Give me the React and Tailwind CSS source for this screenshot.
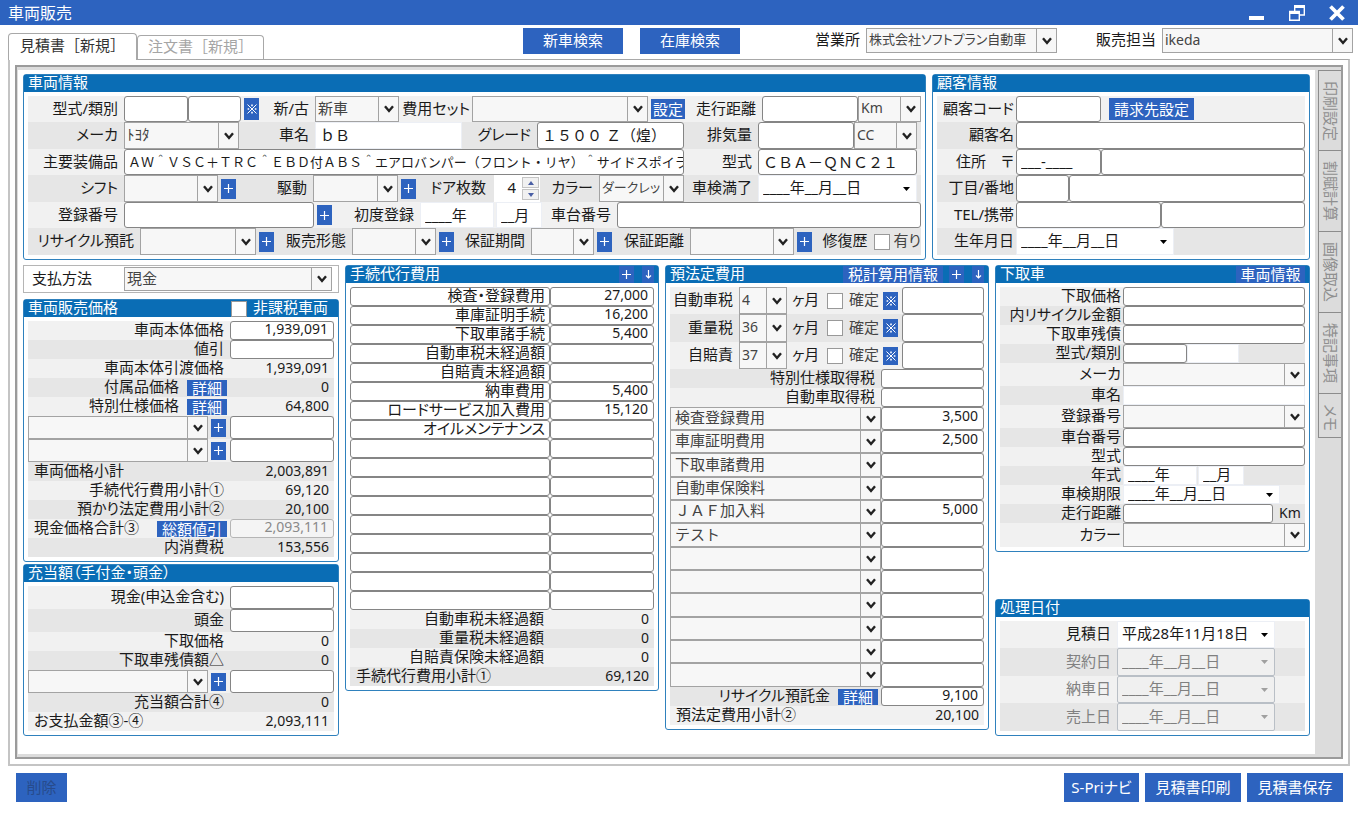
import { useState } from 'react';
import clsx from 'clsx';

// 手続代行費用の明細
const agencyFees = [
    { name: '検査・登録費用', price: '27,000' },
    { name: '車庫証明手続', price: '16,200' },
    { name: '下取車諸手続', price: '5,400' },
    { name: '自動車税未経過額', price: '' },
    { name: '自賠責未経過額', price: '' },
    { name: '納車費用', price: '5,400' },
    { name: 'ロードサービス加入費用', price: '15,120' },
    { name: 'オイルメンテナンス', price: '' },
    ...Array.from({ length: 9 }, () => ({ name: '', price: '' })),
];

// 預法定費用の明細
const legalFees = [
    { name: '検査登録費用', price: '3,500' },
    { name: '車庫証明費用', price: '2,500' },
    { name: '下取車諸費用', price: '' },
    { name: '自動車保険料', price: '' },
    { name: 'ＪＡＦ加入料', price: '5,000' },
    { name: 'テスト', price: '' },
    ...Array.from({ length: 6 }, () => ({ name: '', price: '' })),
];

const taxes = [
    { id: 'car-tax', name: '自動車税', months: '4', height: 'h-[27px]' },
    { id: 'weight-tax', name: '重量税', months: '36', height: 'h-[28px]' },
    { id: 'liability', name: '自賠責', months: '37', height: 'h-[27px]' },
];

const sideTabs = ['印刷設定', '割賦計算', '画像取込', '特記事項', 'メモ'];

const EMPTY_DATE = '____年__月__日';

function Panel({ title, actions, className, children }) {
    return (
        <section className={clsx('rounded-[3px] border border-[#2f81bd] bg-white', className)}>
            <header className="flex h-[17px] items-center bg-[#0a6db5] pl-1 text-white">
                <h2 className="flex-1 pb-0.5 leading-[17px] whitespace-nowrap">{title}</h2>
                {actions}
            </header>
            <div className="p-1">{children}</div>
        </section>
    );
}

// 一行おきに背景色を変える
function Rows({ className, children }) {
    return <div className={clsx('[&>*:nth-child(odd)]:bg-[#f1f1f1] [&>*:nth-child(even)]:bg-[#e6e6e6]', className)}>{children}</div>;
}

function Row({ height = 'h-[19px]', className, children }) {
    return <div className={clsx('flex items-center', height, className)}>{children}</div>;
}

function Label({ htmlFor, className = 'flex-1 pr-1.5', children }) {
    return (
        <label htmlFor={htmlFor} className={clsx('shrink-0 pb-0.5 text-right whitespace-nowrap', className)}>
            {children}
        </label>
    );
}

function Box({ className, plain, ...props }) {
    return (
        <input
            type="text"
            className={clsx(
                'h-full min-w-0 bg-white pb-0.5 [font-feature-settings:normal] outline-none',
                plain ? 'border border-[#eceff5]' : 'rounded-[3px] border border-[#858585]',
                className,
            )}
            {...props}
        />
    );
}

function Price({ className = 'w-[104px]', ...props }) {
    return <Box className={clsx('shrink-0 pr-[5px] pb-1 text-right text-sm leading-4', className)} {...props} />;
}

function Amount({ children }) {
    return <output className="w-[104px] shrink-0 pr-[5px] pb-0.5 text-right text-sm">{children}</output>;
}

function Combo({ className, textClass = 'pl-0.5', value = '', ...props }) {
    return (
        <div className={clsx('flex h-full min-w-0 border border-[#a3a3a3] bg-[#f7f7f7]', className)}>
            <select
                defaultValue={value}
                className={clsx('min-w-0 flex-1 appearance-none overflow-hidden bg-transparent pb-0.5 text-[#444] outline-none', textClass)}
                {...props}
            >
                <option value={value}>{value}</option>
            </select>
            <span className="pointer-events-none flex w-5 shrink-0 items-center justify-center border-l border-[#a3a3a3]">
                <svg width="10" height="8" viewBox="0 0 10 8" fill="none" stroke="#222" strokeWidth="2.4">
                    <path d="M1 1.2 5 6 9 1.2" />
                </svg>
            </span>
        </div>
    );
}

function DateBox({ className, value = EMPTY_DATE, disabled, ...props }) {
    return (
        <div
            className={clsx(
                'flex h-full items-center border pr-1.5',
                disabled ? 'rounded-[2px] border-[#b9bfc6] bg-[#f0f0f0] text-[#808080]' : 'border-[#eceff5] bg-white',
                className,
            )}
        >
            <input
                type="text"
                defaultValue={value}
                disabled={disabled}
                className="h-full min-w-0 flex-1 pb-1 pl-1 leading-4 outline-none"
                {...props}
            />
            <svg width="7" height="4" viewBox="0 0 7 4" fill={disabled ? '#a0a0a0' : '#000'}>
                <path d="M0 0h7L3.5 4z" />
            </svg>
        </div>
    );
}

function Btn({ className, children, ...props }) {
    return (
        <button
            type="button"
            className={clsx('flex shrink-0 items-center justify-center bg-[#2d63bf] leading-4 whitespace-nowrap text-white', className)}
            {...props}
        >
            {children}
        </button>
    );
}

function PlusIcon() {
    return (
        <svg width="9" height="9" viewBox="0 0 9 9" stroke="#fff" strokeWidth="1.2">
            <path d="M4.5 0v9M0 4.5h9" />
        </svg>
    );
}

function Plus({ className, label = '追加' }) {
    return (
        <Btn className={clsx('w-[15px]', className)} aria-label={label}>
            <PlusIcon />
        </Btn>
    );
}

function Mark({ className }) {
    return (
        <Btn className={clsx('w-[15px]', className)} aria-label="参照">
            <svg width="10" height="10" viewBox="0 0 10 10" stroke="#fff" strokeWidth="1">
                <path d="M.5.5l9 9M9.5.5l-9 9" />
                <path d="M5 .6v1.6M5 7.8v1.6M.6 5h1.6M7.8 5h1.6" strokeWidth="1.6" />
            </svg>
        </Btn>
    );
}

function Check({ className, ...props }) {
    return (
        <input
            type="checkbox"
            className={clsx('size-4 shrink-0 appearance-none border border-[#999] bg-white checked:bg-[#2d63bf]', className)}
            {...props}
        />
    );
}

function HeaderTools() {
    return (
        <>
            <Plus className="h-[17px]" label="行を追加" />
            <Btn className="mr-1 ml-2 h-[17px] w-3" aria-label="下へ">
                <svg width="7" height="9" viewBox="0 0 7 9" fill="none" stroke="#fff" strokeWidth="1.2">
                    <path d="M3.5 0v8M1 5.5l2.5 2.5L6 5.5" />
                </svg>
            </Btn>
        </>
    );
}

function TitleBar() {
    return (
        <header className="flex h-[25px] items-center bg-[#2d63bf] pr-[13px] pl-2 text-white">
            <h1 className="flex-1 text-base leading-6">車両販売</h1>
            <div className="flex items-center gap-6">
                <button type="button" aria-label="最小化">
                    <svg width="16" height="16" viewBox="0 0 16 16" fill="#fff">
                        <path d="M0 11h15v4H0z" />
                    </svg>
                </button>
                <button type="button" aria-label="元に戻す">
                    <svg width="16" height="16" viewBox="0 0 16 16" fill="none" stroke="#fff" strokeWidth="1.4">
                        <path d="M5.700 6V1.500h9.600V10H11" />
                        <path d="M5 1.500h11" strokeWidth="3" />
                        <path d="M.7 6.500h9.600v8.800H.7z" />
                        <path d="M0 7.500h11" strokeWidth="3" />
                    </svg>
                </button>
                <button type="button" aria-label="閉じる">
                    <svg width="16" height="16" viewBox="0 0 16 16" stroke="#fff" strokeWidth="3.8">
                        <path d="M1.500 1.500l13 13M14.500 1.500l-13 13" />
                    </svg>
                </button>
            </div>
        </header>
    );
}

function TopBar({ tab, setTab }) {
    return (
        <div className="flex h-[34px] items-start pl-2">
            <div className="flex w-[515px] items-end self-stretch [font-feature-settings:normal]" role="tablist">
                <button
                    type="button"
                    role="tab"
                    aria-selected={tab === 0}
                    onClick={() => setTab(0)}
                    className="z-10 -mb-px h-[27px] w-[129px] rounded-t border border-b-0 border-[#a8a8a8] bg-white pb-1 text-[#333]"
                >
                    見積書［新規］
                </button>
                <button
                    type="button"
                    role="tab"
                    aria-selected={tab === 1}
                    onClick={() => setTab(1)}
                    className="h-6 w-[127px] rounded-t border border-b-0 border-[#a8a8a8] bg-white pb-0.5 text-[#a5a5a5]"
                >
                    注文書［新規］
                </button>
            </div>
            <Btn className="mt-[3px] h-[26px] w-[100px] pb-0.5">新車検索</Btn>
            <Btn className="mt-[3px] ml-[17px] h-[26px] w-[100px] pb-0.5">在庫検索</Btn>
            <div className="mt-[3px] ml-auto flex h-[25px] items-center pr-[5px]">
                <Label htmlFor="office" className="pr-1.5">営業所</Label>
                <Combo id="office" className="w-[191px]" textClass="text-[13px] pl-0.5" value="株式会社ソフトプラン自動車" />
                <Label htmlFor="staff" className="w-[105px] pr-1.5">販売担当</Label>
                <Combo id="staff" className="w-[191px]" textClass="text-sm pl-0.5" value="ikeda" />
            </div>
        </div>
    );
}

function VehicleInfo() {
    return (
        <Panel title="車両情報">
            <Rows>
                <Row height="h-[26px]">
                    <Label htmlFor="type1" className="w-24 pr-1.5">型式/類別</Label>
                    <Box id="type1" className="w-16 px-1.5" />
                    <Box aria-label="類別" className="w-[53px] px-1.5" />
                    <Mark className="ml-[3px] h-[22px]" />
                    <Label htmlFor="condition" className="w-14 pr-1.5">新/古</Label>
                    <Combo id="condition" className="w-[84px]" value="新車" />
                    <Label htmlFor="cost-set" className="w-[73px] pr-0.5">費用セット</Label>
                    <Combo id="cost-set" className="flex-1" />
                    <Btn className="ml-[3px] h-5 w-[34px]">設定</Btn>
                    <Label htmlFor="mileage" className="w-[77px] pr-1.5">走行距離</Label>
                    <Box id="mileage" className="w-24 px-1.5" />
                    <Combo aria-label="距離単位" className="w-[63px]" textClass="text-sm pl-0.5" value="Km" />
                </Row>
                <Row height="h-[27px]">
                    <Label htmlFor="maker" className="w-24 pr-1.5">メーカ</Label>
                    <Combo id="maker" className="w-[115px]" value="ﾄﾖﾀ" />
                    <Label htmlFor="model" className="w-[76px] pr-1.5">車名</Label>
                    <Box id="model" plain className="w-[147px] px-1" defaultValue="ｂＢ" />
                    <Label htmlFor="grade" className="w-[75px] pr-1.5">グレード</Label>
                    <Box id="grade" className="flex-1 px-1" defaultValue="１５００ Ｚ（煌）" />
                    <Label htmlFor="cc" className="w-[74px] pr-1.5">排気量</Label>
                    <Box id="cc" className="w-24 px-1.5" />
                    <Combo aria-label="排気量単位" className="mr-1 w-[63px]" textClass="text-sm pl-0.5" value="CC" />
                </Row>
                <Row height="h-[26px]">
                    <Label htmlFor="equip" className="w-24 pr-1.5">主要装備品</Label>
                    <Box
                        id="equip"
                        className="flex-1 pl-[3px] text-[13px]"
                        defaultValue="ＡＷ＾ＶＳＣ＋ＴＲＣ＾ＥＢＤ付ＡＢＳ＾エアロバンパー（フロント・リヤ）＾サイドスポイラ"
                    />
                    <Label htmlFor="katashiki" className="w-[74px] pr-1.5">型式</Label>
                    <Box id="katashiki" className="mr-1 w-[159px] px-1" defaultValue="ＣＢＡ－ＱＮＣ２１" />
                </Row>
                <Row height="h-[27px]">
                    <Label htmlFor="shift" className="w-24 pr-1.5">シフト</Label>
                    <Combo id="shift" className="w-[94px]" />
                    <Plus className="ml-[3px] h-5" />
                    <Label htmlFor="drive" className="w-[77px] pr-1.5">駆動</Label>
                    <Combo id="drive" className="w-[85px]" />
                    <Plus className="ml-[3px] h-5" />
                    <Label htmlFor="doors" className="w-[78px] pr-2">ドア枚数</Label>
                    <div className="flex h-full w-[46px] items-center bg-white pr-px">
                        <input id="doors" type="text" defaultValue="4" className="min-w-0 flex-1 pr-1.5 pb-0.5 text-right outline-none" />
                        <div className="flex flex-col gap-px">
                            <button type="button" aria-label="増やす" className="flex h-[11px] w-[17px] items-center justify-center border border-[#c4c4c4] bg-[#f1f1f1]">
                                <svg width="6" height="4" viewBox="0 0 6 4" fill="#4a5fa5"><path d="M3 0l3 4H0z" /></svg>
                            </button>
                            <button type="button" aria-label="減らす" className="flex h-[11px] w-[17px] items-center justify-center border border-[#c4c4c4] bg-[#f1f1f1]">
                                <svg width="6" height="4" viewBox="0 0 6 4" fill="#4a5fa5"><path d="M0 0h6L3 4z" /></svg>
                            </button>
                        </div>
                    </div>
                    <Label htmlFor="color" className="w-[59px] pr-1.5">カラー</Label>
                    <Combo id="color" className="flex-1" textClass="text-[13px] pl-0.5" value="ダークレッ" />
                    <Label htmlFor="inspection" className="w-[74px] pr-1.5">車検満了</Label>
                    <DateBox id="inspection" className="mr-1 w-[159px]" />
                </Row>
                <Row height="h-[26px]">
                    <Label htmlFor="reg-no" className="w-24 pr-1.5">登録番号</Label>
                    <Box id="reg-no" className="w-[190px] px-1.5" />
                    <Plus className="ml-[3px] h-5" />
                    <Label htmlFor="first-year" className="w-[88px] pr-1.5">初度登録</Label>
                    <Box id="first-year" plain className="w-[74px] pl-1" defaultValue="____年" />
                    <Box aria-label="初度登録月" plain className="ml-0.5 w-[46px] pl-1" defaultValue="__月" />
                    <Label htmlFor="chassis" className="w-[75px] pr-1.5">車台番号</Label>
                    <Box id="chassis" className="flex-1 px-1.5" />
                </Row>
                <Row height="h-[27px]">
                    <Label htmlFor="recycle" className="w-28 pr-1.5">リサイクル預託</Label>
                    <Combo id="recycle" className="w-[116px]" />
                    <Plus className="ml-[3px] h-5" />
                    <Label htmlFor="sale-type" className="w-[78px] pr-1.5">販売形態</Label>
                    <Combo id="sale-type" className="w-[84px]" />
                    <Plus className="ml-[3px] h-5" />
                    <Label htmlFor="warranty" className="w-[77px] pr-1.5">保証期間</Label>
                    <Combo id="warranty" className="w-[63px]" />
                    <Plus className="ml-[3px] h-5" />
                    <Label htmlFor="warranty-km" className="w-[78px] pr-1.5">保証距離</Label>
                    <Combo id="warranty-km" className="flex-1" />
                    <Plus className="ml-[3px] h-5" />
                    <span className="w-[62px] pr-1.5 pb-0.5 text-right">修復歴</span>
                    <Check id="repaired" />
                    <Label htmlFor="repaired" className="pl-1 text-[#444]">有り</Label>
                </Row>
            </Rows>
        </Panel>
    );
}

function CustomerInfo() {
    const label = 'w-[79px] pr-0.5';
    return (
        <Panel title="顧客情報">
            <Rows>
                <Row height="h-[26px]">
                    <Label htmlFor="cust-code" className={label}>顧客コード</Label>
                    <Box id="cust-code" className="w-[85px] px-1.5" />
                    <Btn className="ml-2 h-[22px] w-[85px]">請求先設定</Btn>
                </Row>
                <Row height="h-[27px]">
                    <Label htmlFor="cust-name" className={label}>顧客名</Label>
                    <Box id="cust-name" className="flex-1 px-1.5" />
                </Row>
                <Row height="h-[26px]">
                    <Label htmlFor="zip" className={label}>住所　〒</Label>
                    <Box id="zip" className="w-[85px] pl-1" defaultValue="___-____" />
                    <Box aria-label="住所" className="flex-1 px-1.5" />
                </Row>
                <Row height="h-[27px]">
                    <Label htmlFor="block" className={label}>丁目/番地</Label>
                    <Box id="block" className="w-[53px] px-1.5" />
                    <Box aria-label="番地" className="flex-1 px-1.5" />
                </Row>
                <Row height="h-[26px]">
                    <Label htmlFor="tel" className={label}>TEL/携帯</Label>
                    <Box id="tel" className="flex-1 px-1.5" />
                    <Box aria-label="携帯" className="flex-1 px-1.5" />
                </Row>
                <Row height="h-[27px]">
                    <Label htmlFor="birthday" className={label}>生年月日</Label>
                    <DateBox id="birthday" className="w-[158px]" />
                </Row>
            </Rows>
        </Panel>
    );
}

function SumRow({ label, value, left, action }) {
    return (
        <Row>
            <span className={clsx('flex-1 pb-0.5 whitespace-nowrap', left ? 'pl-1.5' : 'pr-1.5 text-right')}>{label}</span>
            {action && <Btn className="mr-[3px] ml-0.5 h-4 w-10">{action}</Btn>}
            <Amount>{value}</Amount>
        </Row>
    );
}

function ExtraRow({ name }) {
    return (
        <Row height="h-[23px]">
            <Combo aria-label={name} className="flex-1" />
            <Plus className="mr-1 ml-[3px] h-[18px]" />
            <Price aria-label={name + '金額'} />
        </Row>
    );
}

function SalesPrice() {
    return (
        <Panel
            title="車両販売価格"
            actions={
                <div className="flex items-center pr-2.5">
                    <Check id="tax-free" />
                    <label htmlFor="tax-free" className="pb-0.5 pl-1.5 leading-[17px]">非課税車両</label>
                </div>
            }
        >
            <Rows>
                <Row>
                    <Label htmlFor="body-price">車両本体価格</Label>
                    <Price id="body-price" defaultValue="1,939,091" />
                </Row>
                <Row>
                    <Label htmlFor="discount">値引</Label>
                    <Price id="discount" />
                </Row>
                <SumRow label="車両本体引渡価格" value="1,939,091" />
                <SumRow label="付属品価格" value="0" action="詳細" />
                <SumRow label="特別仕様価格" value="64,800" action="詳細" />
                <ExtraRow name="追加項目1" />
                <ExtraRow name="追加項目2" />
                <SumRow label="車両価格小計" value="2,003,891" left />
                <SumRow label="手続代行費用小計①" value="69,120" />
                <SumRow label="預かり法定費用小計②" value="20,100" />
                <Row>
                    <Label htmlFor="cash-total" className="flex-1 pl-1.5 text-left!">現金価格合計③</Label>
                    <Btn className="mr-[3px] h-4 w-[70px]">総額値引</Btn>
                    <Price id="cash-total" disabled className="w-[104px] border-[#b5b5b5]! bg-[#f4f4f4]! text-[#8a8a8a]" defaultValue="2,093,111" />
                </Row>
                <SumRow label="内消費税" value="153,556" />
            </Rows>
        </Panel>
    );
}

function Deposit() {
    return (
        <Panel title="充当額（手付金・頭金）" className="mt-0.5">
            <Rows>
                <Row height="h-[23px]">
                    <Label htmlFor="cash">現金(申込金含む)</Label>
                    <Price id="cash" />
                </Row>
                <Row height="h-[23px]">
                    <Label htmlFor="down">頭金</Label>
                    <Price id="down" />
                </Row>
                <SumRow label="下取価格" value="0" />
                <SumRow label="下取車残債額△" value="0" />
                <ExtraRow name="充当項目" />
                <SumRow label="充当額合計④" value="0" />
                <SumRow label="お支払金額③-④" value="2,093,111" left />
            </Rows>
        </Panel>
    );
}

function AgencyFees() {
    return (
        <Panel title="手続代行費用" actions={<HeaderTools />}>
            {agencyFees.map((fee, i) => (
                <Row key={i}>
                    <Box aria-label={`費用名${i + 1}`} className="flex-1 pr-1 pb-1 text-right leading-4 [font-feature-settings:'palt']!" defaultValue={fee.name} />
                    <Price aria-label={`金額${i + 1}`} defaultValue={fee.price} />
                </Row>
            ))}
            <Rows>
                <SumRow label="自動車税未経過額" value="0" />
                <SumRow label="重量税未経過額" value="0" />
                <SumRow label="自賠責保険未経過額" value="0" />
                <SumRow label="手続代行費用小計①" value="69,120" left />
            </Rows>
        </Panel>
    );
}

function LegalFees() {
    return (
        <Panel
            title="預法定費用"
            actions={
                <>
                    <Btn className="mr-1.5 h-[17px] w-[100px] pb-0.5">税計算用情報</Btn>
                    <HeaderTools />
                </>
            }
        >
            <Rows>
                {taxes.map((tax) => (
                    <Row key={tax.id} height={tax.height}>
                        <Label htmlFor={tax.id} className="flex-1 pr-1.5">{tax.name}</Label>
                        <Combo id={tax.id} className="w-12" textClass="text-sm pl-0.5" value={tax.months} />
                        <span className="w-10 pb-0.5 pl-[5px]">ヶ月</span>
                        <Check id={tax.id + '-fixed'} />
                        <Label htmlFor={tax.id + '-fixed'} className="w-[38px] pr-0.5 text-[#444]">確定</Label>
                        <Mark className="mr-1 ml-0.5 h-[18px]" />
                        <Price className="w-[82px]" aria-label={tax.name + '金額'} />
                    </Row>
                ))}
                <Row>
                    <Label htmlFor="special-tax">特別仕様取得税</Label>
                    <Price id="special-tax" className="w-[103px]" />
                </Row>
                <Row>
                    <Label htmlFor="acq-tax">自動車取得税</Label>
                    <Price id="acq-tax" className="w-[103px]" />
                </Row>
                {legalFees.map((fee, i) => (
                    <Row key={i} height={i % 3 === 2 ? 'h-6' : 'h-[23px]'}>
                        <Combo
                            aria-label={`法定費用${i + 1}`}
                            className="flex-1"
                            textClass="pl-1 [font-feature-settings:normal]"
                            value={fee.name}
                        />
                        <Price className="w-[103px] pb-1.5" aria-label={`法定費用金額${i + 1}`} defaultValue={fee.price} />
                    </Row>
                ))}
                <Row>
                    <Label htmlFor="recycle-fee">リサイクル預託金</Label>
                    <Btn className="mr-[3px] ml-0.5 h-4 w-10">詳細</Btn>
                    <Price id="recycle-fee" className="w-[103px]" defaultValue="9,100" />
                </Row>
                <SumRow label="預法定費用小計②" value="20,100" left />
            </Rows>
        </Panel>
    );
}

function TradeIn() {
    const label = 'w-[123px] pr-0.5';
    return (
        <Panel title="下取車" actions={<Btn className="mr-1 h-[17px] w-[69px] pb-0.5">車両情報</Btn>}>
            <Rows>
                <Row>
                    <Label htmlFor="ti-price" className={label}>下取価格</Label>
                    <Price id="ti-price" className="flex-1" />
                </Row>
                <Row>
                    <Label htmlFor="ti-recycle" className={label}>内リサイクル金額</Label>
                    <Price id="ti-recycle" className="flex-1" />
                </Row>
                <Row>
                    <Label htmlFor="ti-debt" className={label}>下取車残債</Label>
                    <Price id="ti-debt" className="flex-1" />
                </Row>
                <Row>
                    <Label htmlFor="ti-type" className={label}>型式/類別</Label>
                    <Box id="ti-type" className="w-16 px-1.5" />
                    <Box aria-label="下取車類別" plain className="w-[52px] px-1.5" />
                </Row>
                <Row height="h-[23px]">
                    <Label htmlFor="ti-maker" className={label}>メーカ</Label>
                    <Combo id="ti-maker" className="flex-1" />
                </Row>
                <Row>
                    <Label htmlFor="ti-model" className={label}>車名</Label>
                    <Box id="ti-model" plain className="flex-1 px-1.5" />
                </Row>
                <Row height="h-[23px]">
                    <Label htmlFor="ti-reg" className={label}>登録番号</Label>
                    <Combo id="ti-reg" className="flex-1" />
                </Row>
                <Row>
                    <Label htmlFor="ti-chassis" className={label}>車台番号</Label>
                    <Box id="ti-chassis" className="flex-1 px-1.5" />
                </Row>
                <Row>
                    <Label htmlFor="ti-katashiki" className={label}>型式</Label>
                    <Box id="ti-katashiki" className="flex-1 px-1.5" />
                </Row>
                <Row>
                    <Label htmlFor="ti-year" className={label}>年式</Label>
                    <Box id="ti-year" plain className="w-[74px] pb-1 pl-1 leading-4" defaultValue="____年" />
                    <Box aria-label="年式月" plain className="ml-px w-[46px] pb-1 pl-1 leading-4" defaultValue="__月" />
                </Row>
                <Row>
                    <Label htmlFor="ti-expiry" className={label}>車検期限</Label>
                    <DateBox id="ti-expiry" className="w-[157px]" />
                </Row>
                <Row>
                    <Label htmlFor="ti-km" className={label}>走行距離</Label>
                    <Box id="ti-km" className="flex-1 px-1.5" />
                    <span className="w-8 pb-0.5 pl-1.5 text-sm">Km</span>
                </Row>
                <Row height="h-6">
                    <Label htmlFor="ti-color" className={label}>カラー</Label>
                    <Combo id="ti-color" className="flex-1" />
                </Row>
            </Rows>
        </Panel>
    );
}

function ProcessDates() {
    const dates = [
        { id: 'd-quote', name: '見積日', value: '平成28年11月18日', height: 'h-[27px]' },
        { id: 'd-contract', name: '契約日', disabled: true, height: 'h-[28px]' },
        { id: 'd-delivery', name: '納車日', disabled: true, height: 'h-[27px]' },
        { id: 'd-sales', name: '売上日', disabled: true, height: 'h-[28px]' },
    ];
    return (
        <Panel title="処理日付" className="mt-auto">
            <Rows>
                {dates.map((d) => (
                    <Row key={d.id} height={d.height}>
                        <Label htmlFor={d.id} className={clsx('w-[117px] pr-1.5', d.disabled && 'text-[#808080]')}>{d.name}</Label>
                        <DateBox id={d.id} className="w-[158px]" value={d.value} disabled={d.disabled} />
                    </Row>
                ))}
            </Rows>
        </Panel>
    );
}

export default function App() {
    const [tab, setTab] = useState(0);

    return (
        <div className="bg-white font-['Noto_Sans','Noto_Sans_CJK_JP',sans-serif] text-[15px] leading-[19px] text-[#1a1a1a] [font-feature-settings:'palt']">
            <TitleBar />
            <TopBar tab={tab} setTab={setTab} />

            <main className="mr-2 ml-2 border-2 border-t border-[#c4c4c4] border-t-[#a8a8a8] p-[5px]">
                <div className="flex border-2 border-[#9b9b9b] bg-[#dcdcdc] pt-[3px] pb-[3px] pl-px">
                    <div className="min-w-0 flex-1 bg-white pt-1 pr-[5px] pb-[18px] pl-[5px]">
                        <div className="grid grid-cols-[minmax(0,903fr)_minmax(0,378fr)] gap-1.5">
                            <VehicleInfo />
                            <CustomerInfo />
                        </div>
                        <div className="mt-[5px] grid grid-cols-[minmax(0,316fr)_minmax(0,314fr)_minmax(0,324fr)_minmax(0,315fr)] gap-1.5">
                            <div>
                                <div className="mb-1.5 flex h-7 items-center border border-[#b5b5b5] py-px pr-1.5 pl-2">
                                    <Label htmlFor="payment" className="w-[92px] text-left!">支払方法</Label>
                                    <Combo id="payment" className="flex-1" value="現金" />
                                </div>
                                <SalesPrice />
                                <Deposit />
                            </div>
                            <div>
                                <AgencyFees />
                            </div>
                            <div>
                                <LegalFees />
                            </div>
                            <div className="flex flex-col">
                                <TradeIn />
                                <ProcessDates />
                            </div>
                        </div>
                    </div>
                    <nav className="w-[26px] shrink-0 pl-[3px]">
                        {sideTabs.map((name) => (
                            <button
                                key={name}
                                type="button"
                                className={clsx(
                                    'flex w-full items-center justify-start border-b border-l border-[#8c8c8c] pt-2.5 text-[#8f8f8f] [text-orientation:sideways] [writing-mode:vertical-rl] first:border-t',
                                    name === 'メモ' ? 'h-11' : 'h-[81px]',
                                )}
                            >
                                {name}
                            </button>
                        ))}
                    </nav>
                </div>
            </main>

            <footer className="flex gap-1.5 pt-[7px] pr-[15px] pb-3.5 pl-4">
                <Btn className="mr-auto h-[29px] w-[51px] pb-0.5 text-[#274b8c]!" disabled>削除</Btn>
                <Btn className="h-[29px] w-[75px] pb-0.5">S-Priナビ</Btn>
                <Btn className="h-[29px] w-24 pb-0.5">見積書印刷</Btn>
                <Btn className="h-[29px] w-24 pb-0.5">見積書保存</Btn>
            </footer>
        </div>
    );
}
